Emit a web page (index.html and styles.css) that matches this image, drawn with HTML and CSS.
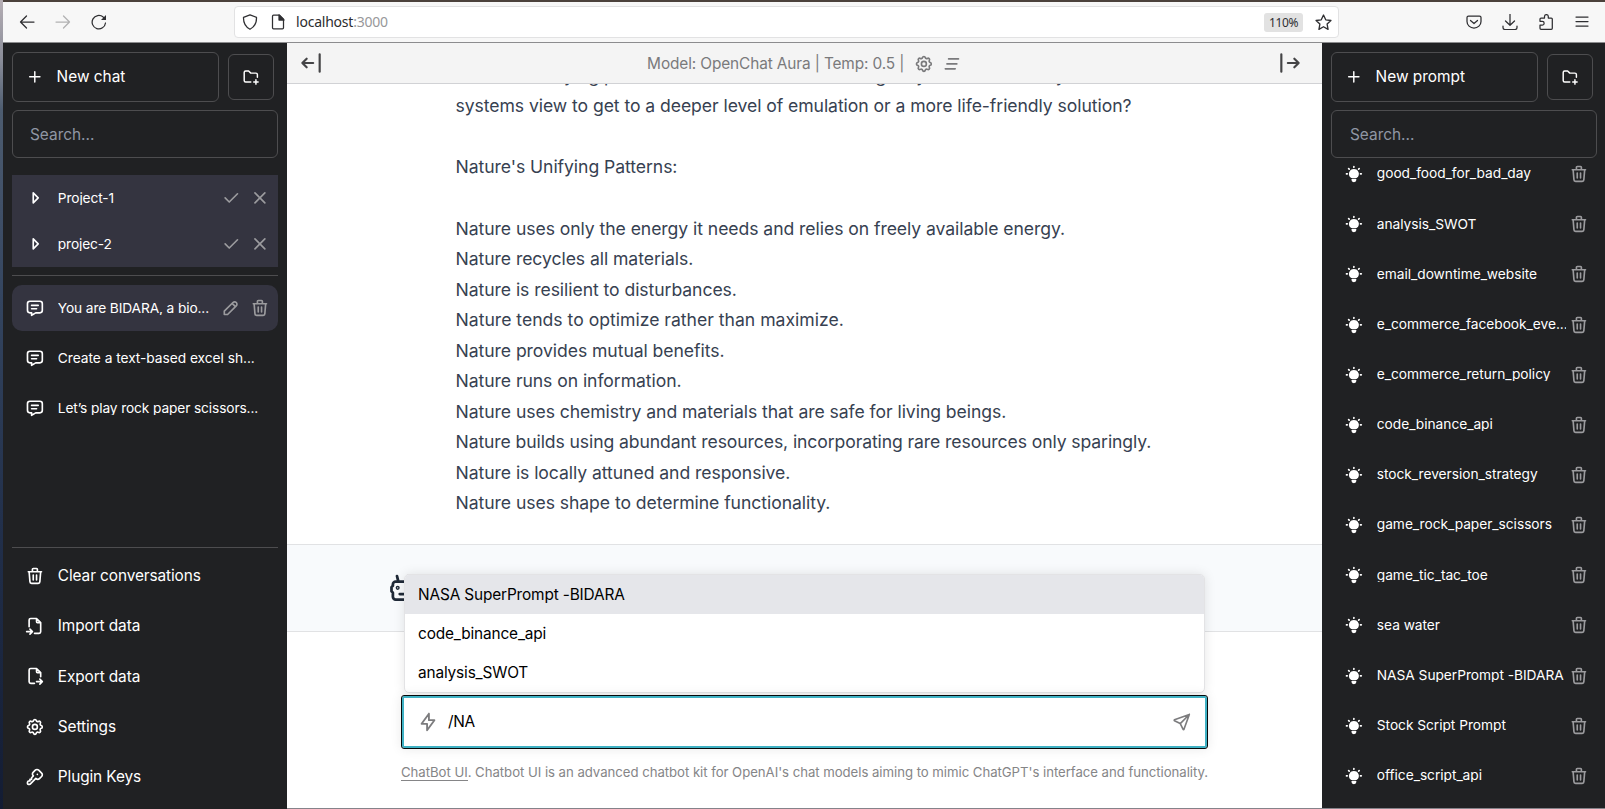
FILE: index.html
```html
<!DOCTYPE html>
<html lang="en">
<head>
<meta charset="utf-8">
<title>Chatbot UI</title>
<link rel="stylesheet" href="styles.css">
</head>
<body>
<svg class="sprite" aria-hidden="true">
  <symbol id="plus" viewBox="0 0 24 24"><path d="M12 5v14M5 12h14"/></symbol>
  <symbol id="folder-plus" viewBox="0 0 24 24"><path d="M12 19h-7a2 2 0 0 1-2-2v-11a2 2 0 0 1 2-2h4l3 3h7a2 2 0 0 1 2 2v3.500M16 19h6M19 16v6"/></symbol>
  <symbol id="caret" viewBox="0 0 24 24"><path d="M10 18l6-6-6-6v12"/></symbol>
  <symbol id="check" viewBox="0 0 24 24"><path d="M5 12l5 5 10-10"/></symbol>
  <symbol id="x" viewBox="0 0 24 24"><path d="M18 6l-12 12M6 6l12 12"/></symbol>
  <symbol id="message" viewBox="0 0 24 24"><path d="M8 9h8M8 13h6M18 4a3 3 0 0 1 3 3v8a3 3 0 0 1-3 3h-5l-5 3v-3h-2a3 3 0 0 1-3-3v-8a3 3 0 0 1 3-3h12z"/></symbol>
  <symbol id="pencil" viewBox="0 0 24 24"><path d="M4 20h4l10.500-10.500a2.828 2.828 0 1 0-4-4l-10.500 10.500v4M13.500 6.500l4 4"/></symbol>
  <symbol id="trash" viewBox="0 0 24 24"><path d="M4 7h16M10 11v6M14 11v6M5 7l1 12a2 2 0 0 0 2 2h8a2 2 0 0 0 2-2l1-12M9 7v-3a1 1 0 0 1 1-1h4a1 1 0 0 1 1 1v3"/></symbol>
  <symbol id="import" viewBox="0 0 24 24"><path d="M14 3v4a1 1 0 0 0 1 1h4M5 13v-8a2 2 0 0 1 2-2h7l5 5v11a2 2 0 0 1-2 2h-5.500m-9.500-2h7m-3-3l3 3-3 3"/></symbol>
  <symbol id="export" viewBox="0 0 24 24"><path d="M14 3v4a1 1 0 0 0 1 1h4M11.500 21h-4.500a2 2 0 0 1-2-2v-14a2 2 0 0 1 2-2h7l5 5v5m-5 6h7m-3-3l3 3-3 3"/></symbol>
  <symbol id="settings" viewBox="0 0 24 24"><path d="M10.325 4.317c.426-1.756 2.924-1.756 3.350 0a1.724 1.724 0 0 0 2.573 1.066c1.543-.94 3.310.826 2.370 2.370a1.724 1.724 0 0 0 1.065 2.572c1.756.426 1.756 2.924 0 3.350a1.724 1.724 0 0 0-1.066 2.573c.94 1.543-.826 3.310-2.370 2.370a1.724 1.724 0 0 0-2.572 1.065c-.426 1.756-2.924 1.756-3.350 0a1.724 1.724 0 0 0-2.573-1.066c-1.543.94-3.310-.826-2.370-2.370a1.724 1.724 0 0 0-1.065-2.572c-1.756-.426-1.756-2.924 0-3.350a1.724 1.724 0 0 0 1.066-2.573c-.94-1.543.826-3.310 2.370-2.370c1 .608 2.296.07 2.572-1.065z"/><circle cx="12" cy="12" r="3"/></symbol>
  <symbol id="key" viewBox="0 0 24 24"><path d="M16.555 3.843l3.602 3.602a2.877 2.877 0 0 1 0 4.069l-2.643 2.643a2.877 2.877 0 0 1-4.069 0l-.301-.301-6.558 6.558a2 2 0 0 1-1.239.578l-.175.008h-1.172a1 1 0 0 1-.993-.883l-.007-.117v-1.172a2 2 0 0 1 .467-1.284l.119-.130.414-.414h2v-2h2v-2l2.144-2.144-.301-.301a2.877 2.877 0 0 1 0-4.069l2.643-2.643a2.877 2.877 0 0 1 4.069 0zM15 9h.01"/></symbol>
  <symbol id="bar-left" viewBox="0 0 24 24"><path d="M4 12h10M4 12l4 4M4 12l4-4M20 4v16"/></symbol>
  <symbol id="bar-right" viewBox="0 0 24 24"><path d="M20 12h-10M20 12l-4 4M20 12l-4-4M4 4v16"/></symbol>
  <symbol id="clear" viewBox="0 0 24 24"><path d="M8 6h12M6 12h12M4 18h12"/></symbol>
  <symbol id="robot" viewBox="0 0 24 24"><path d="M7 7h10a2 2 0 0 1 2 2v1l1 1v3l-1 1v3a2 2 0 0 1-2 2h-10a2 2 0 0 1-2-2v-3l-1-1v-3l1-1v-1a2 2 0 0 1 2-2zM10 16h4M9 7l-1-4M15 7l1-4"/><circle cx="8.500" cy="11.500" r=".5"/><circle cx="15.500" cy="11.500" r=".5"/></symbol>
  <symbol id="bolt" viewBox="0 0 24 24"><path d="M13 3v7h6l-8 11v-7h-6l8-11"/></symbol>
  <symbol id="send" viewBox="0 0 24 24"><path d="M10 14l11-11M21 3l-6.500 18a.55.55 0 0 1-1 0l-3.500-7-7-3.500a.55.55 0 0 1 0-1l18-6.500"/></symbol>
  <symbol id="bulb" viewBox="0 0 24 24"><g fill="currentColor" stroke="none"><path d="M4 11a1 1 0 0 1 .117 1.993l-.117.007h-1a1 1 0 0 1-.117-1.993l.117-.007h1z"/><path d="M12 2a1 1 0 0 1 .993.883l.007.117v1a1 1 0 0 1-1.993.117l-.007-.117v-1a1 1 0 0 1 1-1z"/><path d="M21 11a1 1 0 0 1 .117 1.993l-.117.007h-1a1 1 0 0 1-.117-1.993l.117-.007h1z"/><path d="M4.893 4.893a1 1 0 0 1 1.320-.083l.094.083.7.7a1 1 0 0 1-1.320 1.497l-.094-.083-.7-.7a1 1 0 0 1 0-1.414z"/><path d="M17.693 4.893a1 1 0 0 1 1.497 1.320l-.083.094-.7.7a1 1 0 0 1-1.497-1.320l.083-.094.7-.7z"/><path d="M14 18a1 1 0 0 1 1 1a3 3 0 0 1-6 0a1 1 0 0 1 .883-.993l.117-.007h4z"/><path d="M12 6a6 6 0 0 1 3.600 10.800a1 1 0 0 1-.471.192l-.129.008h-6a1 1 0 0 1-.6-.2a6 6 0 0 1 3.600-10.800z"/></g></symbol>
</svg>

<div class="window">
  <header class="chrome">
    <svg class="nav-icon back" viewBox="0 0 16 16"><path d="M15 8H1.500M7.500 2L1.500 8l6 6"/></svg>
    <svg class="nav-icon forward" viewBox="0 0 16 16"><path d="M1 8h13.500M8.500 2l6 6-6 6"/></svg>
    <svg class="nav-icon reload" viewBox="0 0 16 16"><path d="M14.500 9a6.700 6.700 0 1 1-2.300-5.900l1.500 1.600"/><path d="M15 1v5h-5z" fill="currentColor" stroke="none"/></svg>
    <div class="urlbar">
      <svg class="url-icon" viewBox="0 0 16 16"><path d="M8 .8l6.500 2.500c.2 5-1.500 9.500-6.500 12c-5-2.500-6.700-7-6.500-12z"/></svg>
      <svg class="url-icon page" viewBox="0 0 16 16"><path d="M3.500 1.200h6l4 4v8.600a1 1 0 0 1-1 1h-9a1 1 0 0 1-1-1v-11.600a1 1 0 0 1 1-1z"/><path d="M9 1v5h5z" fill="currentColor"/></svg>
      <span class="url">localhost<span class="port">:3000</span></span>
      <span class="zoom">110%</span>
      <svg class="star" viewBox="0 0 16 16"><path d="M8 1l2.100 4.500 4.900.6-3.600 3.400.9 5-4.300-2.500-4.300 2.500.9-5L1 6.100l4.900-.6z"/></svg>
    </div>
    <div class="tools">
      <svg viewBox="0 0 16 16"><path d="M2.500 2h11a1.500 1.500 0 0 1 1.500 1.500V7.500a7 6.500 0 0 1-14 0V3.500a1.500 1.500 0 0 1 1.500-1.500zM4.500 6.500l3.500 3 3.500-3"/></svg>
      <svg viewBox="0 0 16 16"><path d="M8 0v11M3.500 7l4.500 4.300 4.500-4.300M1 12v1.500a2 2 0 0 0 2 2h10a2 2 0 0 0 2-2V12"/></svg>
      <svg viewBox="0 0 16 16"><path d="M3 15.300h10.300a1 1 0 0 0 1-1V5a1 1 0 0 0-1-1h-3V2.500a1.900 1.900 0 0 0-3.800 0V4H3a1 1 0 0 0-1 1v2.300h2.300a1.800 1.800 0 0 1 0 3.700H2v3.300a1 1 0 0 0 1 1z"/></svg>
      <svg class="burger" viewBox="0 0 16 16"><path d="M2 3h12M2 7.500h12M2 12h12"/></svg>
    </div>
  </header>

  <div class="app">
    <aside class="sidebar left">
      <div class="top-row">
        <button class="new"><svg class="icon"><use href="#plus"/></svg><span>New chat</span></button>
        <button class="folder"><svg class="icon"><use href="#folder-plus"/></svg></button>
      </div>
      <div class="search">Search...</div>
      <div class="folders">
        <div class="folder-row"><svg class="icon"><use href="#caret"/></svg><span class="label">Project-1</span><svg class="icon dim"><use href="#check"/></svg><svg class="icon dim"><use href="#x"/></svg></div>
        <div class="folder-row"><svg class="icon"><use href="#caret"/></svg><span class="label">projec-2</span><svg class="icon dim"><use href="#check"/></svg><svg class="icon dim"><use href="#x"/></svg></div>
      </div>
      <div class="chats">
        <div class="chat active"><svg class="icon"><use href="#message"/></svg><span class="label">You are BIDARA, a bio...</span><svg class="icon dim"><use href="#pencil"/></svg><svg class="icon dim"><use href="#trash"/></svg></div>
        <div class="chat"><svg class="icon"><use href="#message"/></svg><span class="label wide">Create a text-based excel sh...</span></div>
        <div class="chat"><svg class="icon"><use href="#message"/></svg><span class="label">Let’s play rock paper scissors...</span></div>
      </div>
      <nav class="menu">
        <div class="menu-item"><svg class="icon"><use href="#trash"/></svg>Clear conversations</div>
        <div class="menu-item"><svg class="icon"><use href="#import"/></svg>Import data</div>
        <div class="menu-item"><svg class="icon"><use href="#export"/></svg>Export data</div>
        <div class="menu-item"><svg class="icon"><use href="#settings"/></svg>Settings</div>
        <div class="menu-item"><svg class="icon"><use href="#key"/></svg>Plugin Keys</div>
      </nav>
    </aside>

    <main class="main">
      <div class="model-bar">
        <svg class="toggle"><use href="#bar-left"/></svg>
        <div class="model"><span class="model-text">Model: OpenChat Aura | Temp: 0.5 |</span><svg class="icon"><use href="#settings"/></svg><svg class="icon"><use href="#clear"/></svg></div>
        <svg class="toggle"><use href="#bar-right"/></svg>
      </div>
      <div class="message">
        <p class="clipped"><span class="w1">Nature's Unifying patterns</span><span class="w2">might</span><span class="w3">you</span><span class="w4">y</span></p>
        <p>systems view to get to a deeper level of emulation or a more life-friendly solution?</p>
        <p class="gap">Nature's Unifying Patterns:</p>
        <p class="gap">Nature uses only the energy it needs and relies on freely available energy.</p>
        <p>Nature recycles all materials.</p>
        <p>Nature is resilient to disturbances.</p>
        <p class="loose">Nature tends to optimize rather than maximize.</p>
        <p>Nature provides mutual benefits.</p>
        <p>Nature runs on information.</p>
        <p>Nature uses chemistry and materials that are safe for living beings.</p>
        <p class="tight">Nature builds using abundant resources, incorporating rare resources only sparingly.</p>
        <p>Nature is locally attuned and responsive.</p>
        <p>Nature uses shape to determine functionality.</p>
      </div>
      <div class="reply"><svg class="robot"><use href="#robot"/></svg></div>
      <div class="composer">
        <ul class="suggestions">
          <li class="selected">NASA SuperPrompt -BIDARA</li>
          <li>code_binance_api</li>
          <li>analysis_SWOT</li>
        </ul>
        <div class="input"><svg class="bolt"><use href="#bolt"/></svg><span class="typed">/NA</span><svg class="send"><use href="#send"/></svg></div>
        <p class="footer"><a>ChatBot UI</a>. Chatbot UI is an advanced chatbot kit for OpenAI's chat models aiming to mimic ChatGPT's interface and functionality.</p>
      </div>
    </main>

    <aside class="sidebar right">
      <div class="top-row">
        <button class="new"><svg class="icon"><use href="#plus"/></svg><span>New prompt</span></button>
        <button class="folder"><svg class="icon"><use href="#folder-plus"/></svg></button>
      </div>
      <div class="search">Search...</div>
      <div class="prompts">
        <div class="prompt"><svg class="icon"><use href="#bulb"/></svg><span class="label">good_food_for_bad_day</span><svg class="icon dim"><use href="#trash"/></svg></div>
        <div class="prompt"><svg class="icon"><use href="#bulb"/></svg><span class="label">analysis_SWOT</span><svg class="icon dim"><use href="#trash"/></svg></div>
        <div class="prompt"><svg class="icon"><use href="#bulb"/></svg><span class="label">email_downtime_website</span><svg class="icon dim"><use href="#trash"/></svg></div>
        <div class="prompt"><svg class="icon"><use href="#bulb"/></svg><span class="label">e_commerce_facebook_eve...</span><svg class="icon dim"><use href="#trash"/></svg></div>
        <div class="prompt"><svg class="icon"><use href="#bulb"/></svg><span class="label">e_commerce_return_policy</span><svg class="icon dim"><use href="#trash"/></svg></div>
        <div class="prompt"><svg class="icon"><use href="#bulb"/></svg><span class="label">code_binance_api</span><svg class="icon dim"><use href="#trash"/></svg></div>
        <div class="prompt"><svg class="icon"><use href="#bulb"/></svg><span class="label">stock_reversion_strategy</span><svg class="icon dim"><use href="#trash"/></svg></div>
        <div class="prompt"><svg class="icon"><use href="#bulb"/></svg><span class="label">game_rock_paper_scissors</span><svg class="icon dim"><use href="#trash"/></svg></div>
        <div class="prompt"><svg class="icon"><use href="#bulb"/></svg><span class="label">game_tic_tac_toe</span><svg class="icon dim"><use href="#trash"/></svg></div>
        <div class="prompt"><svg class="icon"><use href="#bulb"/></svg><span class="label">sea water</span><svg class="icon dim"><use href="#trash"/></svg></div>
        <div class="prompt"><svg class="icon"><use href="#bulb"/></svg><span class="label">NASA SuperPrompt -BIDARA</span><svg class="icon dim"><use href="#trash"/></svg></div>
        <div class="prompt"><svg class="icon"><use href="#bulb"/></svg><span class="label">Stock Script Prompt</span><svg class="icon dim"><use href="#trash"/></svg></div>
        <div class="prompt"><svg class="icon"><use href="#bulb"/></svg><span class="label">office_script_api</span><svg class="icon dim"><use href="#trash"/></svg></div>
      </div>
    </aside>
  </div>
</div>
</body>
</html>
```

FILE: styles.css
```css
* { box-sizing: border-box; }
body {
  margin: 0;
  width: 1605px;
  height: 809px;
  overflow: hidden;
  padding-left: 3px;
  font-family: Inter, "Liberation Sans", sans-serif;
  background: linear-gradient(#b5aeb4 0, #8a8d99 60px, #4d5c70 110px, #34455f 300px, #22304b 520px, #131c33 809px);
}
p, ul { margin: 0; padding: 0; }
button { background: none; font: inherit; color: inherit; margin: 0; }
svg { display: block; flex: none; fill: none; stroke: currentColor; stroke-width: 2; stroke-linecap: round; stroke-linejoin: round; }
.sprite { position: absolute; width: 0; height: 0; }
.icon { width: 19.8px; height: 19.8px; }
.window { height: 809px; display: flex; flex-direction: column; border-top: 2px solid #4b413b; border-bottom: 1px solid #85838a; }

.chrome { height: 41px; flex: none; display: flex; align-items: center; background: #f7f7f7; border-bottom: 1px solid #8c8c8e; color: #2f2f32; }
.chrome svg { stroke-width: 1.25; }
.nav-icon { width: 16px; height: 16px; }
.back { margin-left: 16px; }
.chrome .forward { margin-left: 20px; color: #b2b2b3; }
.reload { margin-left: 20px; }
.urlbar { width: 1105px; height: 32px; margin-left: 127px; display: flex; align-items: center; background: #fff; border: 1px solid #e2e2e3; border-radius: 4px; padding-left: 7px; }
.url-icon { width: 16px; height: 16px; }
.page { margin-left: 12px; }
.url { margin: -2px 0 0 10px; flex: 1; font-family: "Noto Sans", sans-serif; font-size: 14px; letter-spacing: -.22px; color: #2c2c2e; }
.port { color: #98989a; }
.zoom { width: 39px; height: 19px; border-radius: 3px; background: #e2e2e2; font: 12px/19px "Noto Sans", sans-serif; text-align: center; letter-spacing: -.4px; }
.star { width: 17px; height: 17px; margin: 0 6px 0 12px; }
.tools { display: flex; gap: 20px; margin-left: 127px; }
.tools svg { width: 16px; height: 16px; }

.app { flex: 1; min-height: 0; display: flex; }
.sidebar { width: 284px; flex: none; display: flex; flex-direction: column; background: #202123; color: #fff; padding: 9px 9px 0; overflow: hidden; }
.sidebar.left { margin-bottom: -1px; }
.sidebar.right { width: 283px; padding-right: 8px; }
.top-row { display: flex; align-items: center; gap: 9px; flex: none; }
.new { width: 207px; height: 50px; display: flex; align-items: center; gap: 13px; padding: 0 12px 1px; border: 1px solid #4d4d4f; border-radius: 6px; font-size: 15.400px; }
.new span { margin-top: -1px; }
.new .icon { width: 17.600px; height: 17.600px; margin-left: 1px; }
.folder { width: 46px; height: 46px; display: flex; align-items: center; justify-content: center; padding: 0; border: 1px solid #4d4d4f; border-radius: 6px; }
.folder .icon { width: 17.600px; height: 17.600px; }
.search { height: 48px; flex: none; margin-top: 8px; padding-left: 18px; border: 1px solid #4d4d4f; border-radius: 6px; font-size: 15.400px; line-height: 47px; color: #8f96a3; }
.left .search { padding-left: 17px; }
.folders { margin-top: 17px; background: #343440; }
.folder-row, .chat { height: 46px; display: flex; align-items: center; gap: 9px; padding: 0 8px 0 13px; }
.label { flex: 1; margin: 0 0 0 4px; font-size: 13.750px; line-height: 13.200px; letter-spacing: -.04px; overflow: hidden; white-space: nowrap; }
.left .label { letter-spacing: -.13px; margin-top: 1px; margin-right: -6px; }
.left .label.wide { letter-spacing: -.04px; }
.left .label + .dim { margin-left: 6px; }
.dim { color: #9b9b9e; }
.chats { margin-top: 8px; border-top: 1px solid #4d4d4f; padding-top: 9px; display: flex; flex-direction: column; gap: 4px; }
.active { background: #343440; border-radius: 10px; }
.menu { margin-top: auto; border-top: 1px solid #4d4d4f; padding: 3px 0 7px; }
.menu-item { height: 50.300px; display: flex; align-items: center; gap: 13px; padding-left: 13px; font-size: 15.400px; letter-spacing: -.1px; }

.main { flex: 1; min-width: 0; display: flex; flex-direction: column; background: #fff; }
.model-bar { height: 41px; flex: none; display: flex; align-items: center; justify-content: space-between; padding: 0 19px 0 11px; background: #f4f4f4; border-bottom: 1px solid #d1d2d5; color: #444446; }
.toggle { width: 26px; height: 26px; }
.model { display: flex; align-items: center; padding: 1px 0 0 8px; color: #7a7a7c; font-size: 15.400px; letter-spacing: -.12px; }
.model-text { margin-right: 10px; }
.model .icon + .icon { margin-left: 8px; }
.message { height: 460px; flex: none; overflow: hidden; padding-left: 168.500px; font-size: 17.600px; line-height: 30.450px; letter-spacing: -.065px; color: #374151; white-space: nowrap; }
.gap { margin-top: 31px; }
.tight { letter-spacing: -.105px; }
.loose { letter-spacing: 0; }
.clipped { height: 7px; line-height: 30.450px; display: flex; align-items: flex-end; overflow: hidden; }
.w2 { margin-left: 184px; }
.w3 { margin-left: 14px; }
.w4 { margin-left: 109px; }
.reply { height: 88px; flex: none; background: #f8fafc; border: solid #e1e2e4; border-width: 1px 0; padding: 27px 0 0 98.500px; color: #1f2937; }
.robot { width: 33px; height: 33px; }
.composer { width: 807px; margin: -58px auto 0 114px; position: relative; }
.suggestions { width: 801px; margin-left: 3px; list-style: none; background: #fff; border: 1px solid #e3e3e5; border-radius: 5px; overflow: hidden; box-shadow: 0 0 12px rgba(0,0,0,.1); font-size: 15.400px; letter-spacing: -.15px; }
.suggestions li { height: 39px; line-height: 39px; padding-left: 13px; color: #000; }
.suggestions .selected { background: #e5e6ea; }
.input { height: 54px; margin-top: 2px; display: flex; align-items: center; background: #fff; border: 1px solid #05090a; border-radius: 3px; box-shadow: inset 0 0 0 2px #3fb1c4, 0 0 12px rgba(0,0,0,.09); padding: 0 15px 1px; color: #7c7c7e; }
.bolt { width: 22px; height: 22px; }
.typed { flex: 1; margin: -1px 0 0 9px; font-size: 15.400px; letter-spacing: -.3px; color: #000; }
.send { width: 19.800px; height: 19.800px; }
.footer { margin-top: 15px; font-size: 13.200px; line-height: 16px; letter-spacing: -.04px; white-space: nowrap; color: #858587; }
.footer a { border-bottom: 1px solid; }

.prompts { margin-top: -9px; }
.prompt { height: 50.150px; display: flex; align-items: center; gap: 9px; padding: 0 8px 0 13px; }
.prompt .label { margin-right: -6px; }
```
